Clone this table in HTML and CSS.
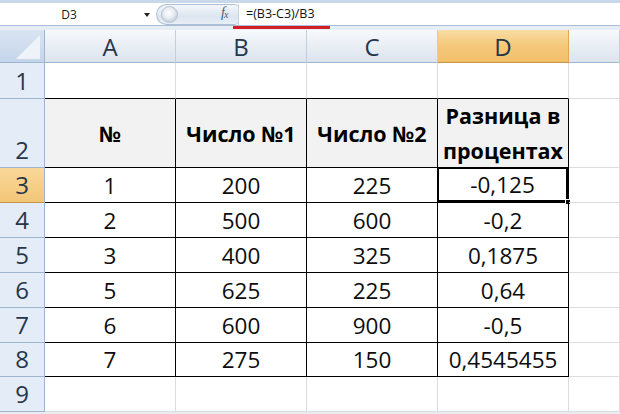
FILE: index.html
```html
<!DOCTYPE html>
<html>
<head>
<meta charset="utf-8">
<link rel="stylesheet" href="styles.css">
</head>
<body>
<div class="app">
  <div class="fbar">
    <div class="namebox"><span class="name">D3</span><span class="arrow"></span></div>
    <div class="fxbtn">
      <span class="knob"></span>
      <span class="fx"><i>f</i><sub>x</sub></span>
    </div>
    <div class="formula">=(B3-C3)/B3</div>
    <span class="redline"></span>
  </div>
  <div class="sheet">
    <div class="corner"><span class="tri"></span></div>
    <div class="ch">A</div><div class="ch">B</div><div class="ch">C</div><div class="ch sel">D</div><div class="ch">&nbsp;</div>

    <div class="rh">1</div>
    <div class="c tb"></div><div class="c tb"></div><div class="c tb"></div><div class="c tb"></div><div class="c"></div>

    <div class="rh">2</div>
    <div class="c t hd">№</div><div class="c t hd">Число №1</div><div class="c t hd">Число №2</div><div class="c t hd">Разница в<br>процентах</div><div class="c"></div>

    <div class="rh sel">3</div>
    <div class="c t">1</div><div class="c t">200</div><div class="c t">225</div><div class="c t active">-0,125<span class="handle"></span></div><div class="c"></div>

    <div class="rh">4</div>
    <div class="c t">2</div><div class="c t">500</div><div class="c t">600</div><div class="c t">-0,2</div><div class="c"></div>

    <div class="rh">5</div>
    <div class="c t">3</div><div class="c t">400</div><div class="c t">325</div><div class="c t">0,1875</div><div class="c"></div>

    <div class="rh">6</div>
    <div class="c t">5</div><div class="c t">625</div><div class="c t">225</div><div class="c t">0,64</div><div class="c"></div>

    <div class="rh">7</div>
    <div class="c t">6</div><div class="c t">600</div><div class="c t">900</div><div class="c t">-0,5</div><div class="c"></div>

    <div class="rh">8</div>
    <div class="c t">7</div><div class="c t">275</div><div class="c t">150</div><div class="c t">0,4545455</div><div class="c"></div>

    <div class="rh">9</div>
    <div class="c"></div><div class="c"></div><div class="c"></div><div class="c"></div><div class="c"></div>
  </div>
</div>
</body>
</html>
```
FILE: styles.css
```css
* { box-sizing: border-box; }
html, body { margin: 0; padding: 0; }
body {
  width: 620px;
  height: 414px;
  overflow: hidden;
  background: #e9edf3;
  font-family: "Open Sans", "Liberation Sans", sans-serif;
}
.app { width: 620px; }

.fbar {
  position: relative;
  height: 30px;
  background: linear-gradient(#c9d7ea 0, #c9d7ea 3px, #ffffff 3px, #ffffff 25px, #a9bdd6 25px, #a9bdd6 26px, #e7edf5 26px);
  display: flex;
  align-items: flex-start;
  padding-top: 4px;
}
.namebox {
  width: 156px;
  height: 21px;
  display: flex;
  align-items: center;
  justify-content: center;
  position: relative;
  font-size: 12px;
  color: #1b1b1b;
}
.namebox .name { margin-left: -18px; }
.namebox .arrow {
  position: absolute;
  left: 144px;
  top: 9px;
  width: 0; height: 0;
  border-left: 3.5px solid transparent;
  border-right: 3.5px solid transparent;
  border-top: 4px solid #222;
}
.fxbtn {
  width: 82px;
  height: 21px;
  border-radius: 11px 4px 4px 11px;
  background: linear-gradient(#f4f7fb, #dce5f0 60%, #e8eef6);
  border: 1px solid #aebfd3;
  border-right: none;
  position: relative;
  display: flex;
  align-items: center;
}
.knob {
  width: 17px; height: 17px;
  border-radius: 50%;
  margin-left: 4px;
  background: radial-gradient(circle at 45% 40%, #ffffff 0, #e5ebf2 45%, #c8d3df 70%, #f3f6fa 100%);
  border: 1px solid #b7c3d1;
}
.fx {
  position: absolute;
  left: 64px;
  top: 0px;
  font-family: "Liberation Serif", serif;
  font-size: 14px;
  color: #4d5d70;
  letter-spacing: -1px;
}
.fx i { font-weight: normal; }
.fx sub { font-size: 10px; font-style: italic; vertical-align: -1px; }
.formula {
  border-left: 1px solid #c6d2e0;
  height: 21px;
  padding-left: 7px;
  font-size: 12.5px;
  line-height: 20px;
  color: #111;
}
.redline {
  position: absolute;
  left: 233px;
  top: 26px;
  width: 97px;
  height: 3px;
  background: #d21f26;
}

.sheet {
  display: grid;
  grid-template-columns: 45px 131px 131px 131px 131px 51px;
  grid-template-rows: 33px 36px 69px 35px 35px 35px 35px 35px 34px 35px;
  background: #fff;
}
.corner {
  background: linear-gradient(#d9e4f2, #c5d5ea);
  border-right: 1px solid #9eb6ce;
  border-bottom: 1px solid #9eb6ce;
  position: relative;
}
.tri {
  position: absolute;
  right: 4px;
  bottom: 3px;
  width: 0; height: 0;
  border-left: 24px solid transparent;
  border-bottom: 24px solid #eef3fa;
}
.ch {
  background: linear-gradient(#f7f9fc, #e9eef5 50%, #dde4ee);
  border-right: 1px solid #c3cfdf;
  border-bottom: 1px solid #9eb6ce;
  display: flex;
  align-items: center;
  justify-content: center;
  font-size: 24px;
  color: #27364a;
}
.ch.sel {
  background: linear-gradient(#f9dca3, #f4c87a 50%, #f1c06a);
  border-right: 1px solid #e2a84d;
  border-bottom: 1px solid #c9944a;
}
.rh {
  background: #e4ecf7;
  border-right: 1px solid #9eb6ce;
  border-bottom: 1px solid #9eb6ce;
  display: flex;
  align-items: flex-end;
  justify-content: center;
  padding-bottom: 1px;
  font-size: 24px;
  color: #27364a;
  line-height: 32px;
}
.rh.sel {
  background: linear-gradient(#f9d89b, #f3c677);
  border-bottom-color: #c9944a;
}
.c {
  border-right: 1px solid #dadcdd;
  border-bottom: 1px solid #dadcdd;
  display: flex;
  align-items: center;
  justify-content: center;
  font-size: 22.5px;
  color: #0d0d0d;
  position: relative;
}
.c.tb { border-bottom: 1px solid #000; }
.c.t { border-right: 1px solid #000; border-bottom: 1px solid #000; }
.c.hd {
  background: #f2f2f2;
  font-weight: 700;
  font-size: 21.5px;
  text-align: center;
  line-height: 35px;
  color: #000;
}
.c.active {
  box-shadow: inset 0 0 0 1px #000, inset 0 0 0 2px #fff;
  border-right: 2px solid #000;
  border-bottom: 2px solid #000;
  margin-top: -1px;
  margin-left: -1px;
  border-top: 1px solid #000;
  border-left: 1px solid #000;
}
.handle {
  position: absolute;
  right: -4px;
  bottom: -4px;
  width: 6px;
  height: 6px;
  background: #000;
  border: 1px solid #fff;
}
```
